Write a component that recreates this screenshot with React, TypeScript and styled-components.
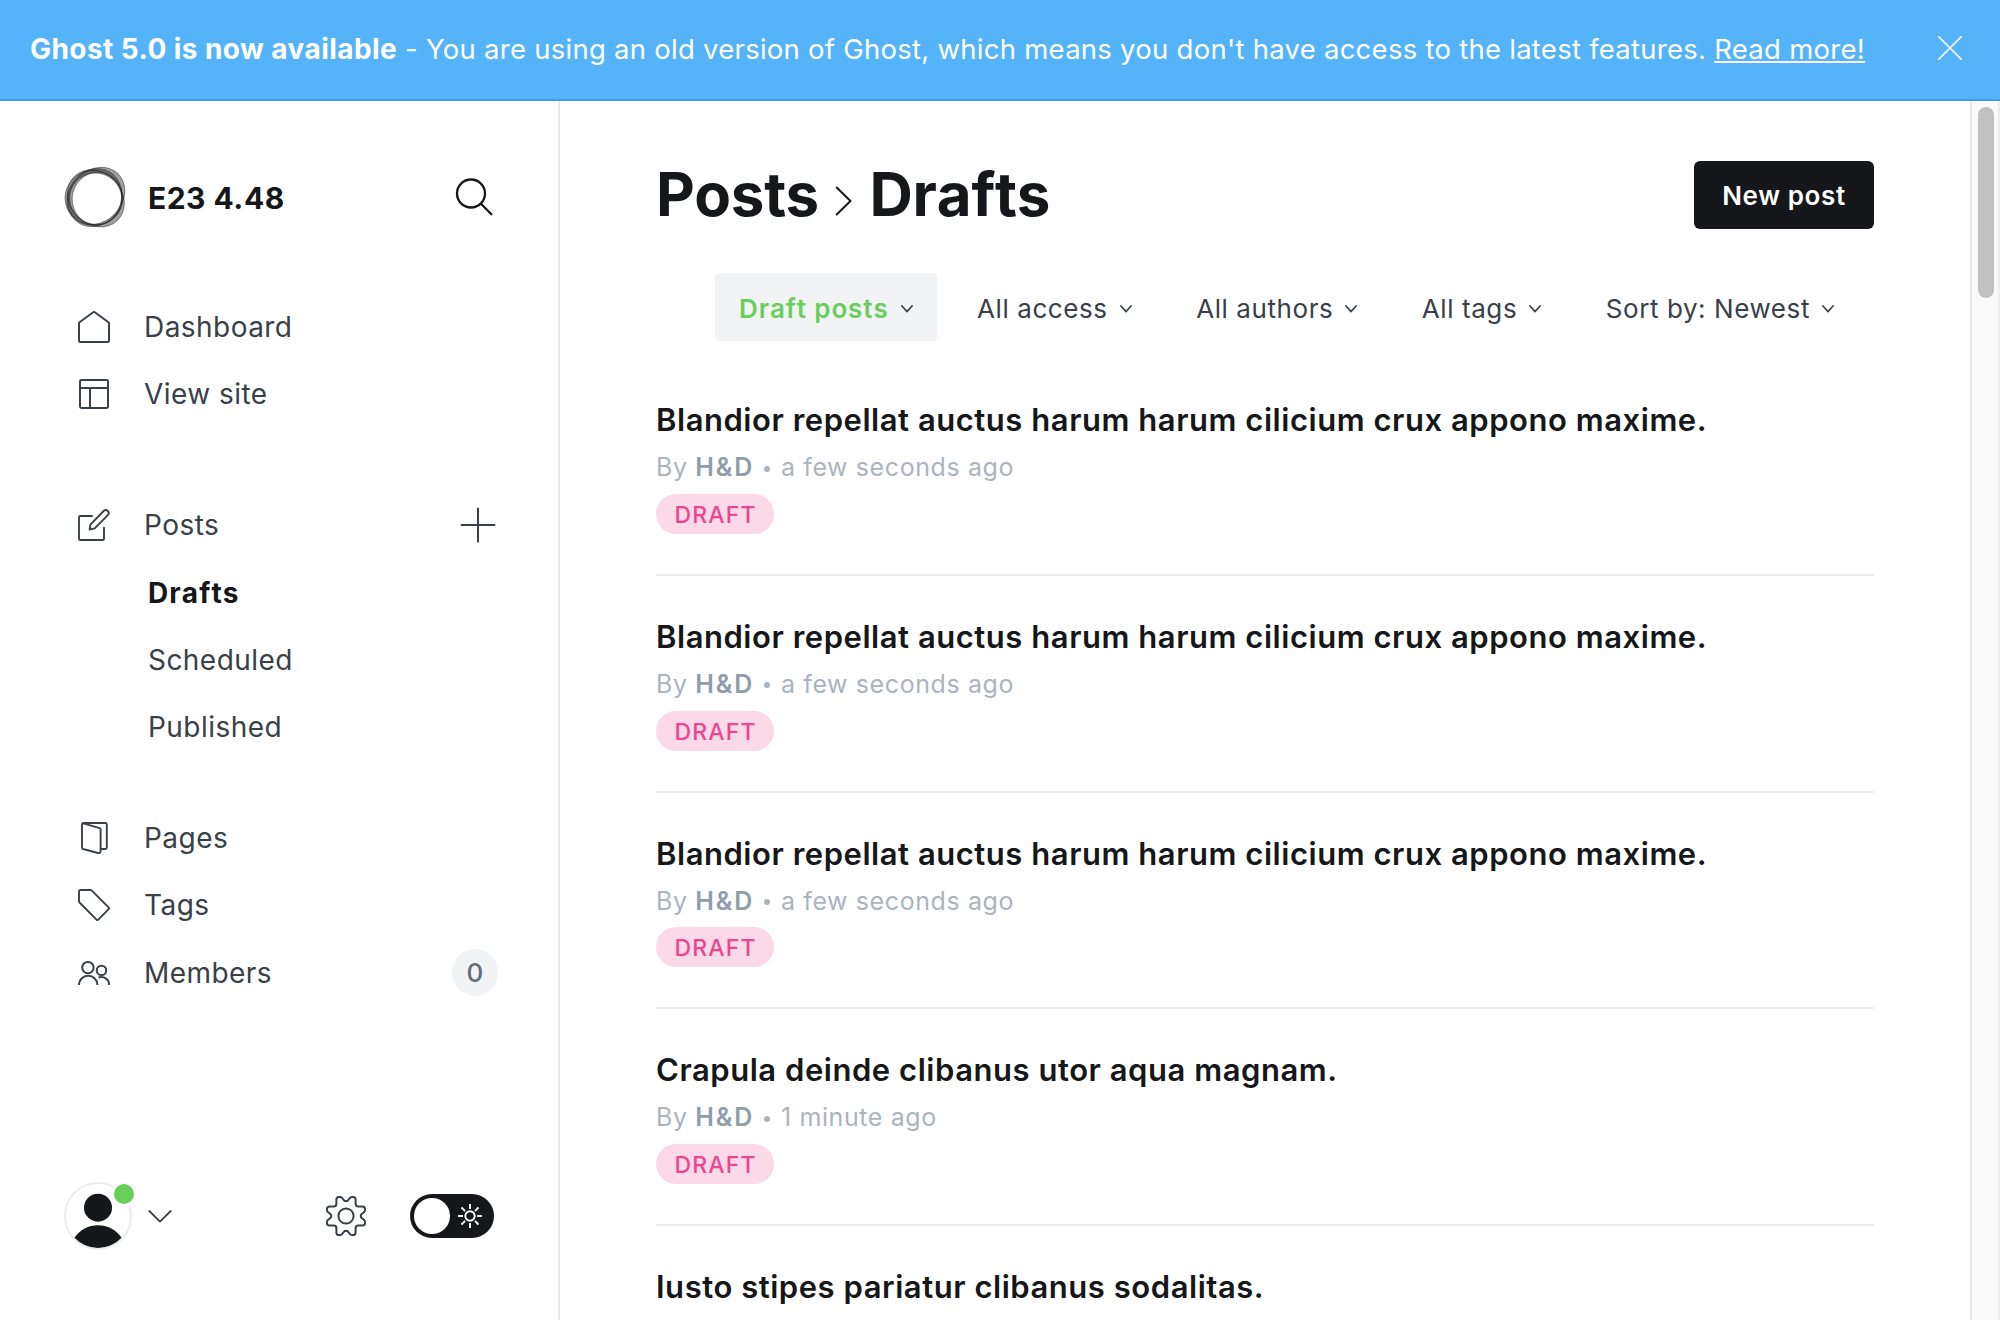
import React from "react";
import styled, { createGlobalStyle } from "styled-components";

const black = "#15171a";
const darkGrey = "#394047";
const line = "#ebecec";

const GlobalStyle = createGlobalStyle`
  *, *::before, *::after { box-sizing: border-box; }
  body {
    margin: 0;
    background: #fff;
    color: ${darkGrey};
    font-family: Inter, "Liberation Sans", sans-serif;
    overflow: hidden;
  }
`;

const Screen = styled.div`
  display: flex;
  flex-direction: column;
  width: 2000px;
  height: 1320px;
  overflow: hidden;
`;

const Banner = styled.header`
  display: flex;
  align-items: center;
  justify-content: space-between;
  flex: none;
  height: 101px;
  padding: 0 38px 2px 30px;
  background: #54b3f9;
  border-bottom: 2px solid #439cde;
  color: #fff;
  font-size: 27.5px;
  letter-spacing: 0.26px;
  white-space: nowrap;

  strong {
    font-size: 28px;
    font-weight: 700;
    letter-spacing: 0.43px;
  }
`;

const BannerLink = styled.a`
  color: #fff;
  text-decoration: underline;
  text-decoration-thickness: 2px;
  text-underline-offset: 2px;
`;

const Body = styled.div`
  display: flex;
  flex: 1;
  min-height: 0;
`;

const Sidebar = styled.nav`
  display: flex;
  flex-direction: column;
  flex: none;
  width: 560px;
  padding: 65px 62px 70px 64px;
  border-right: 2px solid #e6e7e8;
`;

const SiteHeader = styled.div`
  display: flex;
  align-items: center;
  height: 62px;
  margin-bottom: 65px;
  padding-right: 3px;
`;

const SiteName = styled.div`
  flex: 1;
  padding: 2px 0 0 20px;
  color: ${black};
  font-size: 30px;
  font-weight: 700;
  letter-spacing: 0.5px;
`;

const NavGroup = styled.ul<{ $gap: number }>`
  margin: 0 0 ${(p) => p.$gap}px;
  padding: 0;
  list-style: none;
`;

const NavRow = styled.li`
  display: flex;
  align-items: center;
  height: 67.3px;
  padding-left: 14px;
  font-size: 28px;
  letter-spacing: 0.45px;

  > svg:first-child { margin-right: 34px; }
`;

const NavLabel = styled.span`
  flex: 1;
`;

const SubRow = styled.li<{ $active?: boolean }>`
  display: flex;
  align-items: center;
  height: 67.3px;
  padding-left: 84px;
  color: ${(p) => (p.$active ? black : darkGrey)};
  font-size: 28px;
  font-weight: ${(p) => (p.$active ? 700 : 400)};
  font-kerning: ${(p) => (p.$active ? "none" : "auto")};
  letter-spacing: ${(p) => (p.$active ? 1.1 : 0.45)}px;
`;

const CountBadge = styled.span`
  display: flex;
  align-items: center;
  justify-content: center;
  width: 46px;
  height: 47px;
  margin-right: -2px;
  border-radius: 24px;
  background: #f1f3f4;
  color: #626d79;
  font-size: 26px;
  font-weight: 500;
  letter-spacing: 0;
`;

const SidebarFooter = styled.div`
  display: flex;
  align-items: center;
  margin-top: auto;
  height: 68px;
`;

const Avatar = styled.div`
  position: relative;
  width: 68px;
  height: 68px;
  margin-right: 16px;
  border: 2px solid ${line};
  border-radius: 50%;

  svg { display: block; }
`;

const StatusDot = styled.span`
  position: absolute;
  top: -2px;
  right: -6px;
  width: 24px;
  height: 24px;
  border: 2px solid #fff;
  border-radius: 50%;
  background: #69ce5a;
`;

const FooterSpacer = styled.div`
  flex: 1;
`;

const Toggle = styled.div`
  display: flex;
  align-items: center;
  justify-content: space-between;
  width: 84px;
  height: 44px;
  margin-left: 43px;
  margin-right: 2px;
  padding: 0 11px 0 4px;
  border-radius: 22px;
  background: ${black};
`;

const Knob = styled.span`
  width: 36px;
  height: 36px;
  border-radius: 50%;
  background: #fff;
`;

const Main = styled.main`
  flex: 1;
  min-width: 0;
  padding: 60px 96px 0;
  overflow: hidden;
`;

const TitleBar = styled.div`
  display: flex;
  align-items: center;
  justify-content: space-between;
  height: 68px;
`;

const Title = styled.h2`
  display: flex;
  align-items: center;
  margin: 0;
  color: ${black};
  font-size: 60px;
  font-weight: 700;
  letter-spacing: -0.2px;
  line-height: 66px;
  padding-bottom: 2px;

  svg { margin: 13px 17.5px 0 16px; }
`;

const CurrentView = styled.span`
  font-kerning: none;
`;

const PrimaryButton = styled.button`
  width: 180px;
  height: 68px;
  padding: 0;
  border: 0;
  border-radius: 6px;
  background: ${black};
  color: #fff;
  font-family: inherit;
  font-size: 26px;
  font-weight: 600;
  letter-spacing: 0.6px;
`;

const Filters = styled.div`
  display: flex;
  justify-content: flex-end;
  gap: 16.5px;
  margin-top: 44px;
  padding-right: 16px;
`;

const Filter = styled.div<{ $active?: boolean }>`
  display: flex;
  align-items: center;
  gap: 12px;
  height: 68px;
  padding: 0 24px;
  border-radius: 4px;
  background: ${(p) => (p.$active ? "#f1f3f5" : "transparent")};
  font-size: 26px;
  letter-spacing: 0.6px;
  white-space: nowrap;

  span {
    padding-top: 2px;
    color: ${(p) => (p.$active ? "#69ce5a" : darkGrey)};
    font-weight: ${(p) => (p.$active ? 600 : 400)};
    font-kerning: ${(p) => (p.$active ? "none" : "auto")};
    letter-spacing: ${(p) => (p.$active ? 0.9 : 0.58)}px;
  }

  svg { margin-top: 3px; }
`;

const PostList = styled.ol`
  margin: 18.3px 0 0;
  padding: 0;
  list-style: none;
`;

const PostRow = styled.li`
  height: 216.67px;
  padding-top: 39px;
  border-bottom: 2px solid ${line};
`;

const PostTitle = styled.h3`
  margin: 0 0 7px;
  color: ${black};
  font-size: 31px;
  font-weight: 600;
  letter-spacing: 0.54px;
  line-height: 44px;
  white-space: nowrap;
`;

const PostMeta = styled.p`
  margin: 0 0 8.7px;
  color: #abb4be;
  font-size: 25px;
  letter-spacing: 0.6px;
  line-height: 36px;

  strong {
    color: #8e9cac;
    font-weight: 600;
    letter-spacing: 1.9px;
  }
`;

const Dot = styled.span`
  display: inline-block;
  width: 6px;
  height: 6px;
  margin: 0 3px 0 2.5px;
  border-radius: 50%;
  background: currentColor;
  vertical-align: 4.5px;
`;

const StatusPill = styled.span`
  display: flex;
  align-items: center;
  justify-content: center;
  width: 118px;
  height: 40px;
  padding: 2px 0 0 1px;
  border-radius: 20px;
  background: #fbd9e8;
  color: #eb4691;
  font-size: 23px;
  font-weight: 500;
  letter-spacing: 1.15px;
`;

const ScrollTrack = styled.div`
  flex: none;
  width: 30px;
  padding: 6px 0 0 6px;
  border-left: 2px solid #e8e8e8;
  border-right: 2px solid #ededed;
  background: #fafafa;
`;

const ScrollThumb = styled.div`
  width: 16px;
  height: 191px;
  border-radius: 8px;
  background: #c1c1c1;
`;

const stroke = (width = 2, color = darkGrey) => ({
  fill: "none",
  stroke: color,
  strokeWidth: width,
  strokeLinecap: "round" as const,
  strokeLinejoin: "round" as const,
});

const HomeIcon = () => (
  <svg width="32" height="32" viewBox="0 0 32 32" {...stroke()}>
    <path d="M1 12.4v17.1c0 .8.7 1.5 1.5 1.5h27c.8 0 1.5-.7 1.5-1.5V12.4c0-.4-.2-.8-.6-1.1L16.8 1.3a1.3 1.3 0 0 0-1.6 0L1.6 11.3c-.4.3-.6.7-.6 1.1Z" />
  </svg>
);

const LayoutIcon = () => (
  <svg width="32" height="32" viewBox="0 0 32 32" {...stroke()}>
    <rect x="2" y="2" width="28" height="28" rx="1.4" />
    <path d="M2 10h28M12 10v20" />
  </svg>
);

const ComposeIcon = () => (
  <svg width="32" height="32" viewBox="0 0 32 32" {...stroke(1.9)}>
    <path strokeLinecap="butt" d="M14.8 7H2.3C1.6 7 1 7.6 1 8.3v21.4c0 .7.6 1.3 1.3 1.3h22.4c.7 0 1.3-.6 1.3-1.3V18" />
    <path d="M16.7 19.4 11.6 20.5l1-5.2L25.6 2a2.9 2.9 0 0 1 4.2 4.2Z" />
  </svg>
);

const PagesIcon = () => (
  <svg width="32" height="32" viewBox="0 0 32 32" {...stroke(1.9)}>
    <path d="M4 2.4v23.2c0 .7.4 1.2 1 1.4l15 4c1.1.3 2.6-.2 2.6-1.4V7.5c0-.7-.4-1.2-1-1.4L5.3 1.4M4 2.4C4 1.7 4.5 1 5.3 1h22c.9 0 1.5.6 1.5 1.5v23c0 .9-.6 1.5-1.5 1.5h-4.5" />
  </svg>
);

const TagIcon = () => (
  <svg width="32" height="32" viewBox="0 0 32 32" {...stroke(1.9)}>
    <path d="M1 12.4V2.4C1 1.6 1.6 1 2.4 1h10.2c.4 0 .8.2 1 .4l17 17c.5.5.5 1.3 0 1.8L20.3 30.6c-.5.5-1.3.5-1.8 0L1.5 13.5c-.3-.3-.5-.7-.5-1.1Z" />
  </svg>
);

const MembersIcon = () => (
  <svg width="32" height="32" viewBox="0 0 32 32" {...stroke()} strokeLinecap="butt">
    <circle cx="9.9" cy="10.6" r="5.7" />
    <path d="M.9 28a9.3 9.3 0 0 1 18.6 0" />
    <circle cx="23.5" cy="13.4" r="4.7" />
    <path d="M20.5 20.5c5.5-1.5 10.5 1.5 10.7 7.5" />
  </svg>
);

const SearchIcon = () => (
  <svg width="38" height="38" viewBox="0 0 38 38" {...stroke(2.3, black)}>
    <circle cx="16" cy="15.5" r="14" />
    <path d="M26 25.8 36.3 36.2" />
  </svg>
);

const PlusIcon = () => (
  <svg width="36" height="36" viewBox="0 0 36 36" {...stroke(2)}>
    <path d="M18 1.5v33M1.5 18h33" />
  </svg>
);

const CloseGlyph = styled.svg`
  margin-bottom: 1px;
`;

const CloseIcon = () => (
  <CloseGlyph width="24" height="24" viewBox="0 0 24 24" {...stroke(1.6, "#fff")}>
    <path d="M.7.7l22.6 22.6M23.3.7.7 23.3" />
  </CloseGlyph>
);

const SmallChevron = () => (
  <svg width="12" height="10" viewBox="0 0 12 10" {...stroke(1.6)}>
    <path d="M.8 1.8 6 7.6l5.2-5.8" />
  </svg>
);

const MenuChevron = () => (
  <svg width="24" height="14" viewBox="0 0 24 14" {...stroke(1.8)}>
    <path d="M1.3 2 12 12.6 22.7 2" />
  </svg>
);

const TitleChevron = () => (
  <svg width="17" height="30" viewBox="0 0 17 30" {...stroke(2, black)}>
    <path d="M1.7 1.5 15.5 15 1.7 28.5" />
  </svg>
);

const GearIcon = () => {
  const quarter =
    "M0-14.9C.6-14.9 1-14.7 1.5-15.1L4-18.1C4.6-18.8 5.4-19 6.3-19H7C8.9-19 9.6-17.9 9.6-16.4V-12.2C9.6-10.6 10.6-9.6 12.2-9.6H16.4C17.9-9.6 19-8.9 19-7V-6.3C19-5.4 18.8-4.6 18.1-4L15.1-1.5C14.7-1 14.9-.6 14.9 0";
  return (
    <svg width="42" height="42" viewBox="-21 -21 42 42" {...stroke(2)}>
      {[0, 90, 180, 270].map((a) => (
        <path key={a} d={quarter} transform={`rotate(${a})`} />
      ))}
      <circle r="7.6" />
    </svg>
  );
};

const SunIcon = () => (
  <svg width="26" height="26" viewBox="-13 -13 26 26" {...stroke(1.9, "#fff")} strokeLinecap="butt">
    <circle r="4.7" />
    {[0, 45, 90, 135, 180, 225, 270, 315].map((a) => (
      <path key={a} d="M0-7V-12" transform={`rotate(${a})`} />
    ))}
  </svg>
);

const PersonIcon = () => (
  <svg width="64" height="64" viewBox="0 0 64 64" fill={black}>
    <circle cx="32" cy="23.7" r="14" />
    <path d="M8.5 53.7A28.3 28.3 0 0 1 55.5 53.7A32 32 0 0 1 8.5 53.7Z" />
  </svg>
);

/* Loosely overlapping ellipses; the space between neighbours is tinted. */
const rings = [
  { cx: 36.4, cy: 33.9, rx: 31, ry: 25.8, r: -46 },
  { cx: 33.4, cy: 36, rx: 28.4, ry: 27.4, r: 0 },
  { cx: 35.9, cy: 36.4, rx: 30.8, ry: 26, r: 46 },
  { cx: 37.4, cy: 36.6, rx: 25.2, ry: 26.4, r: 12 },
  { cx: 34.4, cy: 35.6, rx: 29.8, ry: 26.6, r: -60 },
  { cx: 35.8, cy: 36.8, rx: 26.4, ry: 25.6, r: 30 },
];

const ellipsePath = (e: (typeof rings)[number]) => {
  const t = (e.r * Math.PI) / 180;
  const dx = e.rx * Math.cos(t);
  const dy = e.rx * Math.sin(t);
  return `M${e.cx - dx} ${e.cy - dy}A${e.rx} ${e.ry} ${e.r} 1 1 ${e.cx + dx} ${e.cy + dy}A${e.rx} ${e.ry} ${e.r} 1 1 ${e.cx - dx} ${e.cy - dy}Z`;
};

const SiteLogo = () => (
  <svg width="64" height="64" viewBox="4 3 64 64" fillRule="evenodd">
    {rings.map((e, i) => (
      <path
        key={i}
        d={ellipsePath(e) + ellipsePath(rings[(i + 1) % rings.length])}
        fill="#222"
        fillOpacity={0.25}
        stroke="#151515"
        strokeOpacity={0.3}
        strokeWidth={0.8}
      />
    ))}
  </svg>
);

const longTitle = "Blandior repellat auctus harum harum cilicium crux appono maxime.";
const posts: { title: string; time?: string }[] = [
  { title: longTitle, time: "a few seconds ago" },
  { title: longTitle, time: "a few seconds ago" },
  { title: longTitle, time: "a few seconds ago" },
  { title: "Crapula deinde clibanus utor aqua magnam.", time: "1 minute ago" },
  { title: "Iusto stipes pariatur clibanus sodalitas." },
];

const filters = ["Draft posts", "All access", "All authors", "All tags", "Sort by: Newest"];

export default function App() {
  return (
    <Screen>
      <GlobalStyle />
      <Banner>
        <div>
          <strong>Ghost 5.0 is now available</strong> - You are using an old version of Ghost, which
          means you don't have access to the latest features. <BannerLink>Read more!</BannerLink>
        </div>
        <CloseIcon />
      </Banner>
      <Body>
        <Sidebar>
          <SiteHeader>
            <SiteLogo />
            <SiteName>E23 4.48</SiteName>
            <SearchIcon />
          </SiteHeader>
          <NavGroup $gap={64}>
            <NavRow><HomeIcon /><NavLabel>Dashboard</NavLabel></NavRow>
            <NavRow><LayoutIcon /><NavLabel>View site</NavLabel></NavRow>
          </NavGroup>
          <NavGroup $gap={43.5}>
            <NavRow><ComposeIcon /><NavLabel>Posts</NavLabel><PlusIcon /></NavRow>
            <SubRow $active>Drafts</SubRow>
            <SubRow>Scheduled</SubRow>
            <SubRow>Published</SubRow>
          </NavGroup>
          <NavGroup $gap={0}>
            <NavRow><PagesIcon /><NavLabel>Pages</NavLabel></NavRow>
            <NavRow><TagIcon /><NavLabel>Tags</NavLabel></NavRow>
            <NavRow><MembersIcon /><NavLabel>Members</NavLabel><CountBadge>0</CountBadge></NavRow>
          </NavGroup>
          <SidebarFooter>
            <Avatar><PersonIcon /><StatusDot /></Avatar>
            <MenuChevron />
            <FooterSpacer />
            <GearIcon />
            <Toggle><Knob /><SunIcon /></Toggle>
          </SidebarFooter>
        </Sidebar>
        <Main>
          <TitleBar>
            <Title>Posts<TitleChevron /><CurrentView>Drafts</CurrentView></Title>
            <PrimaryButton>New post</PrimaryButton>
          </TitleBar>
          <Filters>
            {filters.map((f, i) => (
              <Filter key={f} $active={i === 0}><span>{f}</span><SmallChevron /></Filter>
            ))}
          </Filters>
          <PostList>
            {posts.map((p, i) => (
              <PostRow key={i}>
                <PostTitle>{p.title}</PostTitle>
                {p.time && (
                  <>
                    <PostMeta>By <strong>H&amp;D</strong> <Dot /> {p.time}</PostMeta>
                    <StatusPill>DRAFT</StatusPill>
                  </>
                )}
              </PostRow>
            ))}
          </PostList>
        </Main>
        <ScrollTrack><ScrollThumb /></ScrollTrack>
      </Body>
    </Screen>
  );
}
